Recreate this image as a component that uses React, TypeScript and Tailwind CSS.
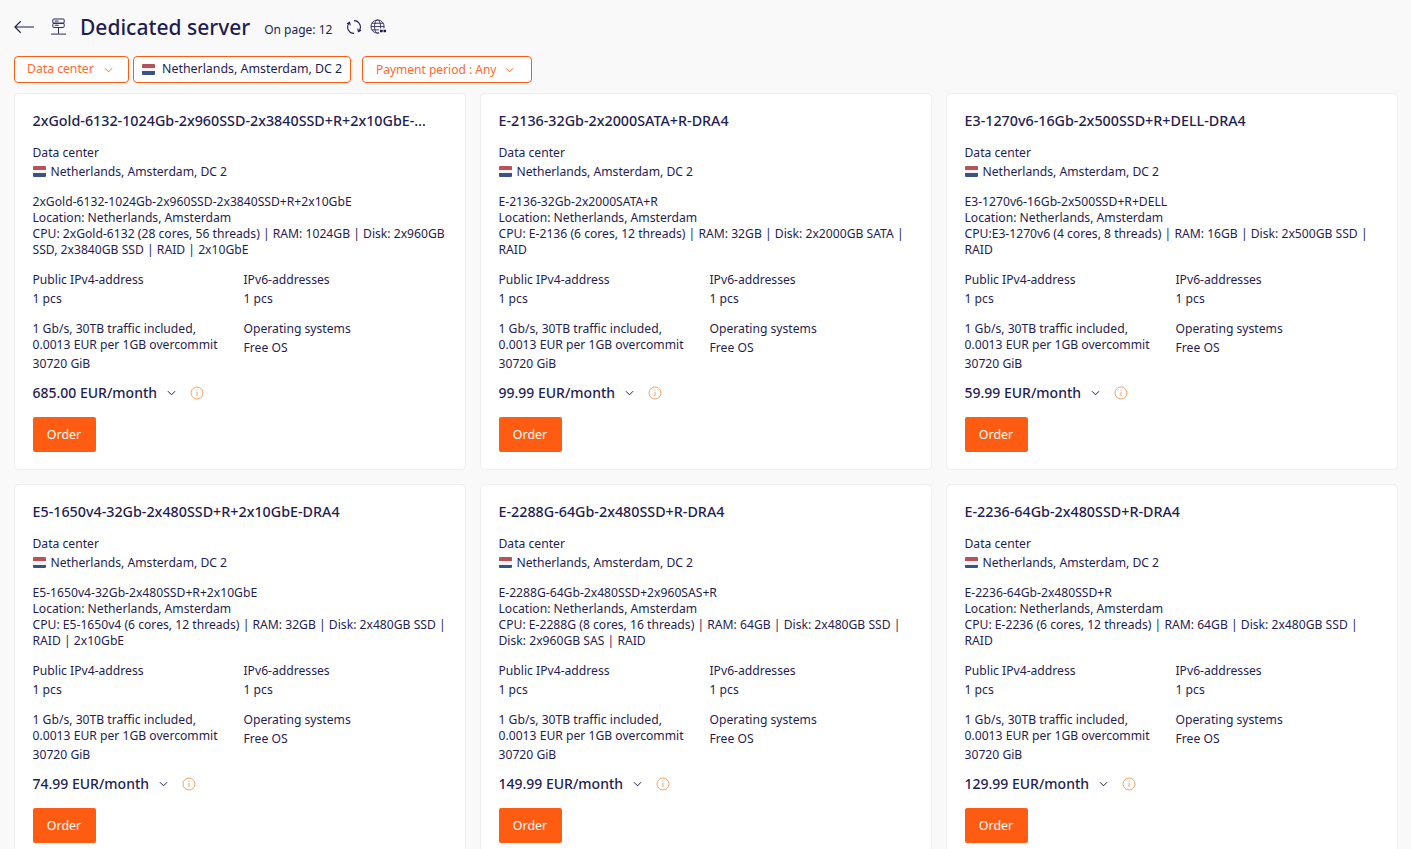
import React from "react";

type Server = {
  title: string;
  model: string;
  cpu: string[];
  price: string;
};

const servers: Server[] = [
  {
    title: "2xGold-6132-1024Gb-2x960SSD-2x3840SSD+R+2x10GbE-DRA4",
    model: "2xGold-6132-1024Gb-2x960SSD-2x3840SSD+R+2x10GbE",
    cpu: ["CPU: 2xGold-6132 (28 cores, 56 threads) | RAM: 1024GB | Disk: 2x960GB", "SSD, 2x3840GB SSD | RAID | 2x10GbE"],
    price: "685.00 EUR/month",
  },
  {
    title: "E-2136-32Gb-2x2000SATA+R-DRA4",
    model: "E-2136-32Gb-2x2000SATA+R",
    cpu: ["CPU: E-2136 (6 cores, 12 threads) | RAM: 32GB | Disk: 2x2000GB SATA |", "RAID"],
    price: "99.99 EUR/month",
  },
  {
    title: "E3-1270v6-16Gb-2x500SSD+R+DELL-DRA4",
    model: "E3-1270v6-16Gb-2x500SSD+R+DELL",
    cpu: ["CPU:E3-1270v6 (4 cores, 8 threads) | RAM: 16GB | Disk: 2x500GB SSD |", "RAID"],
    price: "59.99 EUR/month",
  },
  {
    title: "E5-1650v4-32Gb-2x480SSD+R+2x10GbE-DRA4",
    model: "E5-1650v4-32Gb-2x480SSD+R+2x10GbE",
    cpu: ["CPU: E5-1650v4 (6 cores, 12 threads) | RAM: 32GB | Disk: 2x480GB SSD |", "RAID | 2x10GbE"],
    price: "74.99 EUR/month",
  },
  {
    title: "E-2288G-64Gb-2x480SSD+R-DRA4",
    model: "E-2288G-64Gb-2x480SSD+2x960SAS+R",
    cpu: ["CPU: E-2288G (8 cores, 16 threads) | RAM: 64GB | Disk: 2x480GB SSD |", "Disk: 2x960GB SAS | RAID"],
    price: "149.99 EUR/month",
  },
  {
    title: "E-2236-64Gb-2x480SSD+R-DRA4",
    model: "E-2236-64Gb-2x480SSD+R",
    cpu: ["CPU: E-2236 (6 cores, 12 threads) | RAM: 64GB | Disk: 2x480GB SSD |", "RAID"],
    price: "129.99 EUR/month",
  },
];

function Flag() {
  return (
    <span className="inline-flex h-[11px] w-[13px] shrink-0 flex-col overflow-hidden rounded-[1px]">
      <span className="flex-1 bg-[#b5535d]" />
      <span className="flex-1 bg-[#f3f3f3]" />
      <span className="flex-1 bg-[#3b5288]" />
    </span>
  );
}

function Chevron({ className }: { className: string }) {
  return (
    <svg viewBox="0 0 10 6" fill="none" stroke="currentColor" strokeWidth="1.1" className={className}>
      <path d="M1 1l4 4 4-4" />
    </svg>
  );
}

function ServerCard({ s }: { s: Server }) {
  return (
    <div className="h-[377.3px] rounded-[5px] border border-[#efefef] bg-white pl-[17.5px] pr-4 pt-[17px] text-[12.15px] leading-4 text-[#1f1d52]">
      <div className="w-[396px] overflow-hidden text-ellipsis whitespace-nowrap text-[14.3px] font-medium leading-5">{s.title}</div>
      <div className="mt-[12px] leading-[19px]">Data center</div>
      <div className="flex items-center gap-[5px] leading-[19px]">
        <Flag />
        Netherlands, Amsterdam, DC 2
      </div>
      <div className="mt-[13px]">{s.model}</div>
      <div>Location: Netherlands, Amsterdam</div>
      {s.cpu.map((l) => (
        <div key={l} className="whitespace-nowrap">{l}</div>
      ))}
      <div className="mt-[12px] grid grid-cols-[211px_1fr] leading-[19px]">
        <div>
          <div>Public IPv4-address</div>
          <div>1 pcs</div>
        </div>
        <div>
          <div>IPv6-addresses</div>
          <div>1 pcs</div>
        </div>
      </div>
      <div className="mt-[13px] grid grid-cols-[211px_1fr]">
        <div>
          <div>1 Gb/s, 30TB traffic included,</div>
          <div>0.0013 EUR per 1GB overcommit</div>
          <div className="mt-[3px]">30720 GiB</div>
        </div>
        <div className="-mt-[2px] leading-[19px]">
          <div>Operating systems</div>
          <div>Free OS</div>
        </div>
      </div>
      <div className="mt-[11px] flex h-5 items-center">
        <span className="text-[14px] font-medium">{s.price}</span>
        <Chevron className="ml-[10px] h-[6px] w-[9px]" />
        <svg viewBox="0 0 14 14" fill="none" stroke="#f2a365" strokeWidth="1" className="ml-[14px] h-[14px] w-[14px]">
          <circle cx="7" cy="7" r="6" />
          <path d="M7 6v4M7 3.6v1.2" />
        </svg>
      </div>
      <button className="mt-[14px] h-[35px] w-[63px] rounded-[2px] bg-[#ff5c13] text-[12.4px] text-white">Order</button>
    </div>
  );
}

export default function App() {
  return (
    <div className="h-[849px] overflow-hidden bg-[#f9f9f9] font-['Noto_Sans',sans-serif]">
      <div className="flex h-[56px] items-center pb-[2px] pl-[14px] text-[#1f1d52]">
        <svg viewBox="0 0 22 14" fill="none" stroke="currentColor" strokeWidth="1.2" className="h-[14px] w-[21px]">
          <path d="M21 7H1M7 1L1 7l6 6" />
        </svg>
        <svg viewBox="0 0 18 20" fill="none" stroke="currentColor" strokeWidth="1" className="ml-[15px] h-5 w-[17px]">
          <rect x="3" y="1.5" width="12" height="4.5" rx="1" />
          <rect x="3" y="6" width="12" height="4.5" rx="1" />
          <path d="M5 3.7h4M5 8.2h4M9 10.5V17M1 17.5h16" />
        </svg>
        <h1 className="ml-[13px] text-[21px] font-medium leading-7">Dedicated server</h1>
        <span className="ml-[14px] mt-[6px] text-[12px]">On page: 12</span>
        <svg viewBox="0 0 16 16" fill="none" stroke="currentColor" strokeWidth="1.1" className="ml-[14px] h-4 w-4">
          <path d="M8 1.6A6.4 6.4 0 0 1 12.6 12.4M8 14.4A6.4 6.4 0 0 1 3.4 3.6" />
          <path d="M15 11.2l-2.6 1.4-0.6-3M1 4.8l2.6-1.4 0.6 3" />
        </svg>
        <svg viewBox="0 0 18 18" fill="none" stroke="currentColor" strokeWidth="0.9" className="ml-[8px] h-[17px] w-[17px]">
          <circle cx="8" cy="8" r="7" />
          <ellipse cx="8" cy="8" rx="3.2" ry="7" />
          <path d="M1 8h14M2 4.5h12M2 11.5h12" />
          <rect x="9.5" y="10" width="8" height="5.5" rx="1" fill="white" stroke="none" />
          <path d="M10.5 12.7h6.5" strokeWidth="2.4" strokeDasharray="3 0.8" />
        </svg>
      </div>

      <div className="flex h-[27px] text-[12.2px]">
        <button className="ml-[14px] flex w-[115px] items-center rounded-[4px] border border-[#ff5c13] bg-white pl-3 text-[#ff6a2b]">
          Data center
          <Chevron className="ml-[10px] h-[6px] w-[9px]" />
        </button>
        <div className="ml-[4px] flex w-[218px] items-center gap-[7px] whitespace-nowrap rounded-[4px] border border-[#ff5c13] bg-white pl-2 text-[12.4px] text-[#1f1d52]">
          <Flag />
          Netherlands, Amsterdam, DC 2
        </div>
        <button className="ml-[11px] flex w-[170px] items-center rounded-[4px] border border-[#ff5c13] bg-white pl-[13px] text-[12px] text-[#ff6a2b]">
          Payment period : Any
          <Chevron className="ml-[9px] h-[6px] w-[9px]" />
        </button>
      </div>

      <div className="mt-[10px] grid grid-cols-[452px_452px_452px] gap-[14px] pl-[14px]">
        {servers.map((s) => (
          <ServerCard key={s.title} s={s} />
        ))}
      </div>
    </div>
  );
}
